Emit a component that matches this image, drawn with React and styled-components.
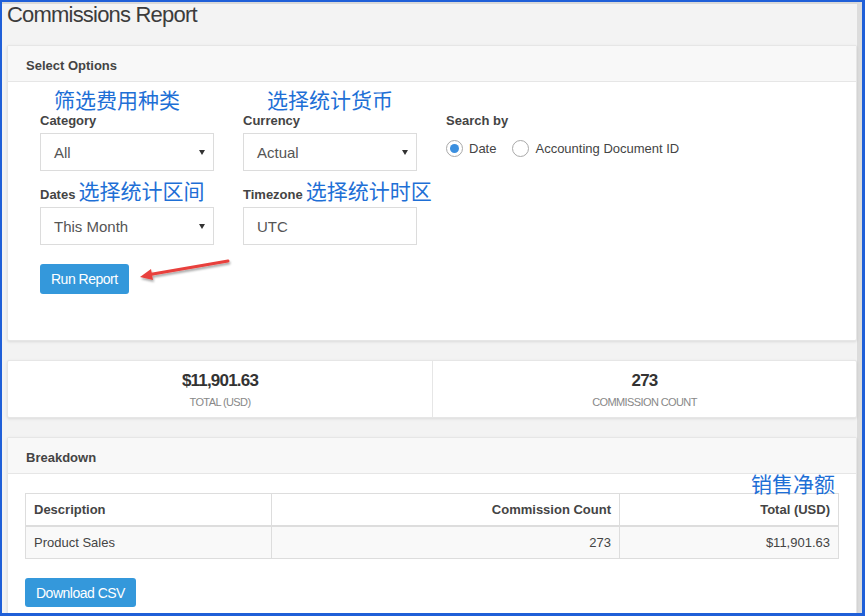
import styled, { createGlobalStyle } from 'styled-components';

const GlobalStyle = createGlobalStyle`
  body {
    margin: 0;
    font-family: 'Liberation Sans', Arial, sans-serif;
    color: #333;
  }
`;

const Frame = styled.div`
  width: 865px;
  height: 616px;
  box-sizing: border-box;
  border: 2px solid #1f5fd8;
  border-right-width: 3px;
  border-bottom-width: 3px;
  overflow: hidden;
  display: flex;
`;

const Page = styled.div`
  flex: 1 1 auto;
  background-color: #f3f3f3;
  border-top: 2px solid #d9d9d9;
  border-right: 5px solid #dcdcdc;
  padding-left: 5px;
`;

const Title = styled.h1`
  margin: 0 0 19px 0;
  font-size: 22px;
  line-height: 22px;
  font-weight: 400;
  letter-spacing: -0.8px;
  color: #3c3c3c;
`;

const Panel = styled.div`
  background-color: #fff;
  border: 1px solid #e6e6e6;
  border-radius: 2px;
  box-shadow: 0 1px 3px rgba(0, 0, 0, 0.1);
  margin-bottom: 19px;
`;

const PanelHeader = styled.div`
  height: 36px;
  box-sizing: border-box;
  line-height: 34px;
  padding: 3px 18px 0;
  background-color: #f8f8f8;
  border-bottom: 1px solid #e6e6e6;
  font-size: 13px;
  font-weight: 700;
  color: #444;
`;

const OptionsBody = styled.div`
  padding: 5px 32px 46px 32px;
`;

const FieldGrid = styled.div`
  display: grid;
  grid-template-columns: 174px 174px 1fr;
  column-gap: 29px;
  margin-top: ${(p) => p.$top || 0}px;
`;

const Field = styled.div`
  display: flex;
  flex-direction: column;
  padding-top: ${(p) => p.$pad || 0}px;
`;

const Note = styled.span`
  font-family: 'Noto Sans CJK SC', 'Liberation Sans', sans-serif;
  font-size: 21px;
  line-height: 24px;
  color: #1e6fd6;
  white-space: nowrap;
  flex-shrink: 0;
  margin-left: ${(p) => p.$indent || 0}px;
`;

const Label = styled.label`
  font-size: 13px;
  line-height: 16px;
  font-weight: 700;
  color: #444;
  margin: 2px 0 4px;
`;

const LabelRow = styled.div`
  display: flex;
  align-items: baseline;
  gap: 3px;
  margin-bottom: 4px;
  white-space: nowrap;

  ${Label} {
    margin: 0;
  }
`;

const Control = styled.div`
  position: relative;
  height: 38px;
  box-sizing: border-box;
  border: 1px solid #dcdcdc;
  background-color: #fff;
  padding: 0 13px;
  display: flex;
  align-items: center;
  font-size: 15px;
  color: #555;
`;

const Caret = styled.span`
  margin-left: auto;
  margin-right: -5px;
  width: 0;
  height: 0;
  border-left: 3px solid transparent;
  border-right: 3px solid transparent;
  border-top: 5px solid #333;
`;

const RadioGroup = styled.div`
  display: flex;
  align-items: center;
  margin-top: 7px;
`;

const RadioOption = styled.label`
  display: flex;
  align-items: center;
  gap: 6px;
  font-size: 13px;
  color: #444;
  margin-right: 16px;
`;

const RadioCircle = styled.span`
  width: 17px;
  height: 17px;
  box-sizing: border-box;
  border-radius: 50%;
  border: 1px solid #a9a9a9;
  background-color: #fff;
  display: flex;
  align-items: center;
  justify-content: center;

  &::after {
    content: '';
    width: 9px;
    height: 9px;
    border-radius: 50%;
    background-color: ${(p) => (p.$checked ? '#3b8fdf' : 'transparent')};
  }
`;

const ButtonRow = styled.div`
  position: relative;
  margin-top: ${(p) => p.$top || 19}px;
`;

const Button = styled.button`
  display: block;
  height: ${(p) => p.$h || 30}px;
  padding: 0 ${(p) => p.$px || 11}px;
  border: none;
  border-radius: 3px;
  background-color: #3498db;
  color: #fff;
  font-family: 'Liberation Sans', Arial, sans-serif;
  font-size: 14px;
  letter-spacing: -0.5px;
`;

const ArrowSvg = styled.svg`
  position: absolute;
  left: 95px;
  top: -9px;
  overflow: visible;
`;

const StatsPanel = styled(Panel)`
  display: grid;
  grid-template-columns: 1fr 1fr;
`;

const Stat = styled.div`
  display: flex;
  flex-direction: column;
  align-items: center;
  padding: 10px 0 9px;

  & + & {
    border-left: 1px solid #e6e6e6;
  }
`;

const StatValue = styled.div`
  font-size: 17px;
  line-height: 20px;
  font-weight: 700;
  letter-spacing: -0.8px;
  color: #333;
`;

const StatLabel = styled.div`
  margin-top: 5px;
  font-size: 11px;
  line-height: 12px;
  letter-spacing: -0.6px;
  color: #888;
  text-transform: uppercase;
`;

const BreakdownBody = styled.div`
  position: relative;
  padding: 19px 17px 40px;
`;

const CornerNote = styled(Note)`
  position: absolute;
  right: 21px;
  top: -3px;
`;

const Table = styled.table`
  width: 100%;
  border-collapse: collapse;
  font-size: 13px;
  color: #444;

  th,
  td {
    height: 31px;
    padding: 0 8px;
    border: 1px solid #dddddd;
  }

  th {
    font-weight: 700;
    border-bottom-width: 2px;
  }

  tbody tr {
    background-color: #f9f9f9;
  }
`;

const Cell = styled.td`
  text-align: ${(p) => (p.$right ? 'right' : 'left')};
`;

const Head = styled.th`
  text-align: ${(p) => (p.$right ? 'right' : 'left')};
`;

const Radio = ({ checked, children }) => (
  <RadioOption>
    <RadioCircle $checked={checked} />
    {children}
  </RadioOption>
);

export default function App() {
  return (
    <>
      <GlobalStyle />
      <Frame>
        <Page>
          <Title>Commissions Report</Title>

          <Panel>
            <PanelHeader>Select Options</PanelHeader>
            <OptionsBody>
              <FieldGrid>
                <Field>
                  <Note $indent={14}>筛选费用种类</Note>
                  <Label>Category</Label>
                  <Control>
                    All
                    <Caret />
                  </Control>
                </Field>
                <Field>
                  <Note $indent={24}>选择统计货币</Note>
                  <Label>Currency</Label>
                  <Control>
                    Actual
                    <Caret />
                  </Control>
                </Field>
                <Field $pad={24}>
                  <Label>Search by</Label>
                  <RadioGroup>
                    <Radio checked>Date</Radio>
                    <Radio>Accounting Document ID</Radio>
                  </RadioGroup>
                </Field>
              </FieldGrid>

              <FieldGrid $top={7}>
                <Field>
                  <LabelRow>
                    <Label>Dates</Label>
                    <Note>选择统计区间</Note>
                  </LabelRow>
                  <Control>
                    This Month
                    <Caret />
                  </Control>
                </Field>
                <Field>
                  <LabelRow>
                    <Label>Timezone</Label>
                    <Note>选择统计时区</Note>
                  </LabelRow>
                  <Control>UTC</Control>
                </Field>
              </FieldGrid>

              <ButtonRow>
                <Button>Run Report</Button>
                <ArrowSvg width="100" height="30" viewBox="0 0 100 30">
                  <defs>
                    <filter id="arrowShadow" x="-20%" y="-50%" width="140%" height="200%">
                      <feDropShadow dx="1" dy="2" stdDeviation="1.2" floodColor="#000" floodOpacity="0.35" />
                    </filter>
                  </defs>
                  <g filter="url(#arrowShadow)">
                    <line x1="93" y1="6" x2="12" y2="20" stroke="#e8413c" strokeWidth="3" strokeLinecap="round" />
                    <path d="M5 22 L16 14 L18 25 Z" fill="#e8413c" />
                  </g>
                </ArrowSvg>
              </ButtonRow>
            </OptionsBody>
          </Panel>

          <StatsPanel>
            <Stat>
              <StatValue>$11,901.63</StatValue>
              <StatLabel>Total (USD)</StatLabel>
            </Stat>
            <Stat>
              <StatValue>273</StatValue>
              <StatLabel>Commission Count</StatLabel>
            </Stat>
          </StatsPanel>

          <Panel>
            <PanelHeader>Breakdown</PanelHeader>
            <BreakdownBody>
              <CornerNote>销售净额</CornerNote>
              <Table>
                <colgroup>
                  <col style={{ width: 246 }} />
                  <col style={{ width: 348 }} />
                  <col />
                </colgroup>
                <thead>
                  <tr>
                    <Head>Description</Head>
                    <Head $right>Commission Count</Head>
                    <Head $right>Total (USD)</Head>
                  </tr>
                </thead>
                <tbody>
                  <tr>
                    <Cell>Product Sales</Cell>
                    <Cell $right>273</Cell>
                    <Cell $right>$11,901.63</Cell>
                  </tr>
                </tbody>
              </Table>
              <ButtonRow $top={19}>
                <Button $h={29} $px={11}>Download CSV</Button>
              </ButtonRow>
            </BreakdownBody>
          </Panel>
        </Page>
      </Frame>
    </>
  );
}
